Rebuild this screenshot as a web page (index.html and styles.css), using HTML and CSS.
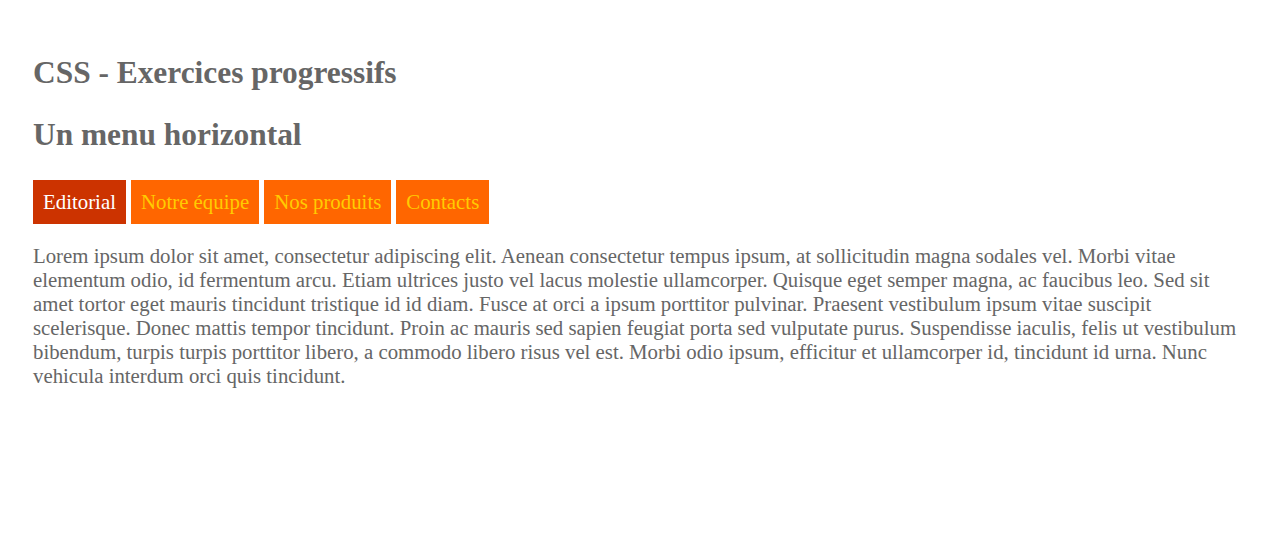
FILE: index.html
```html
<!DOCTYPE html>
<html lang="fr">
<head>
<meta charset="utf-8">
<title>CSS - Exercices progressifs</title>
<link rel="stylesheet" href="styles.css">
</head>
<body>
<div class="page">
<h1 class="title">CSS - Exercices progressifs</h1>
<h2 class="subtitle">Un menu horizontal</h2>
<ul class="menu">
<li class="menu-item active"><a href="#">Editorial</a></li>
<li class="menu-item"><a href="#">Notre équipe</a></li>
<li class="menu-item"><a href="#">Nos produits</a></li>
<li class="menu-item"><a href="#">Contacts</a></li>
</ul>
<p class="text">Lorem ipsum dolor sit amet, consectetur adipiscing elit. Aenean consectetur tempus ipsum, at sollicitudin magna sodales vel. Morbi vitae elementum odio, id fermentum arcu. Etiam ultrices justo vel lacus molestie ullamcorper. Quisque eget semper magna, ac faucibus leo. Sed sit amet tortor eget mauris tincidunt tristique id id diam. Fusce at orci a ipsum porttitor pulvinar. Praesent vestibulum ipsum vitae suscipit scelerisque. Donec mattis tempor tincidunt. Proin ac mauris sed sapien feugiat porta sed vulputate purus. Suspendisse iaculis, felis ut vestibulum bibendum, turpis turpis porttitor libero, a commodo libero risus vel est. Morbi odio ipsum, efficitur et ullamcorper id, tincidunt id urna. Nunc vehicula interdum orci quis tincidunt.</p>
</div>
</body>
</html>
```
FILE: styles.css
```css
html, body {
  margin: 0;
  padding: 0;
  background: #fff;
}
body {
  font-family: "Liberation Serif", "Times New Roman", serif;
  color: #666;
}
.page {
  padding: 55px 28px 20px 33px;
}
.title, .subtitle {
  font-size: 31.4px;
  font-weight: bold;
  margin: 0 0 26px 0;
  line-height: 36px;
}
.subtitle {
  margin-bottom: 27px;
}
.menu {
  list-style: none;
  margin: 0 0 20px 0;
  padding: 0;
  display: flex;
  gap: 5px;
}
.menu-item a {
  display: block;
  background: #ff6600;
  color: #ffcc00;
  text-decoration: none;
  font-size: 20.85px;
  line-height: 24px;
  padding: 10px 10px;
}
.menu-item.active a {
  background: #cc3300;
  color: #fff;
}
.text {
  font-size: 20.8px;
  line-height: 24px;
  margin: 0;
}
```
